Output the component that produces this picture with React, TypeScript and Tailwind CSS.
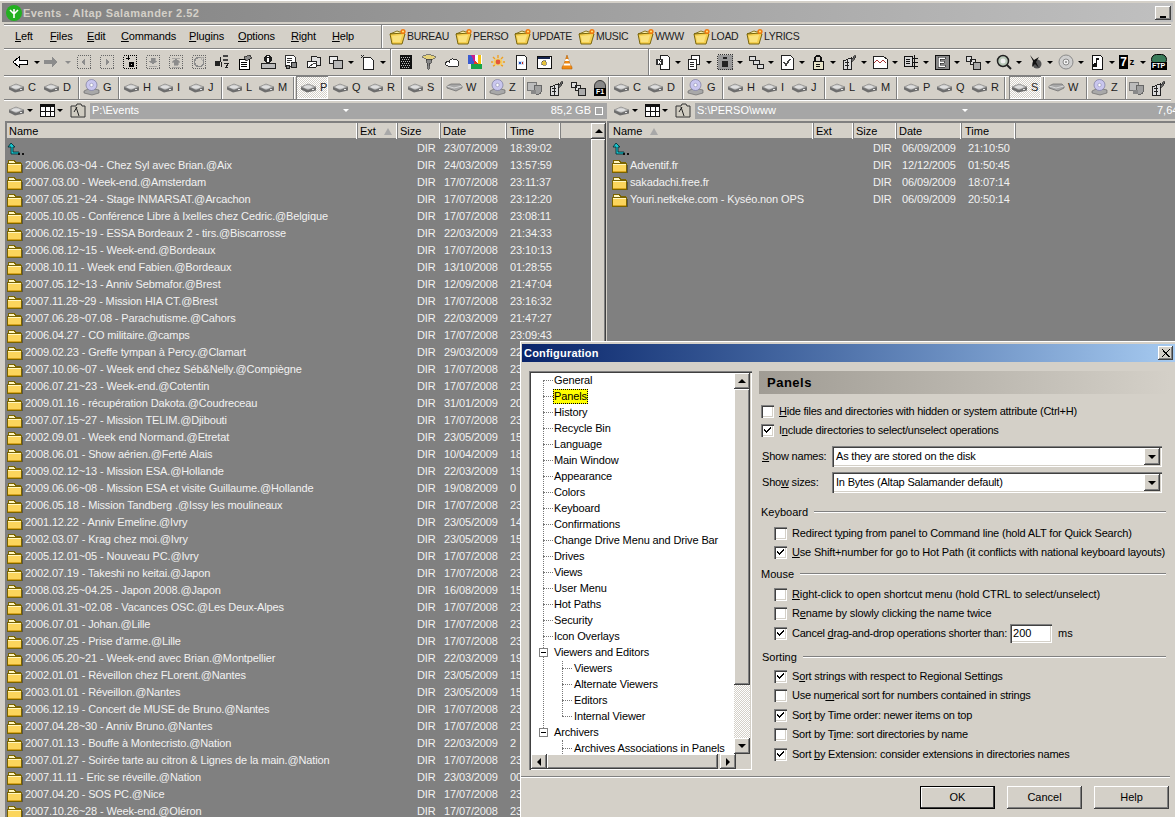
import React from 'react';

const raised = 'shadow-[inset_-1px_-1px_0_#404040,inset_1px_1px_0_#ffffff,inset_-2px_-2px_0_#808080]';
const sunken = 'shadow-[inset_1px_1px_0_#808080,inset_2px_2px_0_#404040,inset_-1px_-1px_0_#ffffff,inset_-2px_-2px_0_#d4d0c8]';

const rows: [string, string, string][] = [
  ['2006.06.03~04 - Chez Syl avec Brian.@Aix', '24/03/2009', '13:57:59'],
  ['2007.03.00 - Week-end.@Amsterdam', '17/07/2008', '23:11:37'],
  ['2007.05.21~24 - Stage INMARSAT.@Arcachon', '17/07/2008', '23:12:20'],
  ['2005.10.05 - Conférence Libre à Ixelles chez Cedric.@Belgique', '17/07/2008', '23:08:11'],
  ['2006.02.15~19 - ESSA Bordeaux 2 - tirs.@Biscarrosse', '22/03/2009', '21:34:33'],
  ['2006.08.12~15 - Week-end.@Bordeaux', '17/07/2008', '23:10:13'],
  ['2008.10.11 - Week end Fabien.@Bordeaux', '13/10/2008', '01:28:55'],
  ['2007.05.12~13 - Anniv Sebmafor.@Brest', '12/09/2008', '21:47:04'],
  ['2007.11.28~29 - Mission HIA CT.@Brest', '17/07/2008', '23:16:32'],
  ['2007.06.28~07.08 - Parachutisme.@Cahors', '22/03/2009', '21:47:27'],
  ['2006.04.27 - CO militaire.@camps', '17/07/2008', '23:09:43'],
  ['2009.02.23 - Greffe tympan à Percy.@Clamart', '29/03/2009', '22'],
  ['2007.10.06~07 - Week end chez Séb&Nelly.@Compiègne', '17/07/2008', '23'],
  ['2006.07.21~23 - Week-end.@Cotentin', '17/07/2008', '23'],
  ['2009.01.16 - récupération Dakota.@Coudreceau', '31/01/2009', '20'],
  ['2007.07.15~27 - Mission TELIM.@Djibouti', '17/07/2008', '23'],
  ['2002.09.01 - Week end Normand.@Etretat', '23/05/2009', '15'],
  ['2008.06.01 - Show aérien.@Ferté Alais', '10/04/2009', '18'],
  ['2009.02.12~13 - Mission ESA.@Hollande', '22/03/2009', '19'],
  ['2009.06.06~08 - Mission ESA et visite Guillaume.@Hollande', '19/08/2009', '0'],
  ['2006.05.18 - Mission Tandberg .@Issy les moulineaux', '17/07/2008', '23'],
  ['2001.12.22 - Anniv Emeline.@Ivry', '23/05/2009', '14'],
  ['2002.03.07 - Krag chez moi.@Ivry', '23/05/2009', '15'],
  ['2005.12.01~05 - Nouveau PC.@Ivry', '17/07/2008', '23'],
  ['2002.07.19 - Takeshi no keitai.@Japon', '17/07/2008', '23'],
  ['2008.03.25~04.25 - Japon 2008.@Japon', '16/08/2009', '15'],
  ['2006.01.31~02.08 - Vacances OSC.@Les Deux-Alpes', '17/07/2008', '23'],
  ['2006.07.01 - Johan.@Lille', '17/07/2008', '23'],
  ['2006.07.25 - Prise d\'arme.@Lille', '17/07/2008', '23'],
  ['2006.05.20~21 - Week-end avec Brian.@Montpellier', '22/03/2009', '19'],
  ['2002.01.01 - Réveillon chez FLorent.@Nantes', '23/05/2009', '15'],
  ['2003.01.01 - Réveillon.@Nantes', '23/05/2009', '15'],
  ['2006.12.19 - Concert de MUSE de Bruno.@Nantes', '17/07/2008', '23'],
  ['2007.04.28~30 - Anniv Bruno.@Nantes', '17/07/2008', '23'],
  ['2007.01.13 - Bouffe à Montecristo.@Nation', '22/03/2009', '2'],
  ['2007.01.27 - Soirée tarte au citron & Lignes de la main.@Nation', '17/07/2008', '23'],
  ['2007.11.11 - Eric se réveille.@Nation', '23/03/2009', '00'],
  ['2007.04.20 - SOS PC.@Nice', '17/07/2008', '23'],
  ['2007.10.26~28 - Week-end.@Oléron', '17/07/2008', '23'],
];

const rightRows: [string, string, string][] = [
  ['Adventif.fr', '12/12/2005', '01:50:45'],
  ['sakadachi.free.fr', '06/09/2009', '18:07:14'],
  ['Youri.netkeke.com - Kyséo.non OPS', '06/09/2009', '20:50:14'],
];

const tree: [string, number][] = [
  ['General', 0], ['Panels', 0], ['History', 0], ['Recycle Bin', 0], ['Language', 0], ['Main Window', 0],
  ['Appearance', 0], ['Colors', 0], ['Keyboard', 0], ['Confirmations', 0], ['Change Drive Menu and Drive Bar', 0],
  ['Drives', 0], ['Views', 0], ['User Menu', 0], ['Hot Paths', 0], ['Security', 0], ['Icon Overlays', 0],
  ['Viewers and Editors', 2], ['Viewers', 1], ['Alternate Viewers', 1], ['Editors', 1], ['Internal Viewer', 1],
  ['Archivers', 2], ['Archives Associations in Panels', 1],
];

function Amp({ text }: { text: string }) {
  const i = text.indexOf('&');
  if (i < 0) return <>{text}</>;
  return (
    <>
      {text.slice(0, i)}
      <u>{text[i + 1]}</u>
      {text.slice(i + 2)}
    </>
  );
}

function Svg({ children, className = 'w-4 h-4' }: { children: React.ReactNode; className?: string }) {
  return (
    <svg viewBox="0 0 16 16" className={`${className} shrink-0`} shapeRendering="crispEdges">
      {children}
    </svg>
  );
}

function Caret() {
  return <span className="block w-0 h-0 shrink-0 border-x-[3px] border-x-transparent border-t-[3px] border-t-black" />;
}

function Folder() {
  return (
    <svg viewBox="0 0 16 14" className="w-4 h-[14px] shrink-0" shapeRendering="crispEdges">
      <path d="M1.5 1.5h6l1 2h5v2h-12z" fill="#fff6c0" stroke="#7a6400" />
      <path d="M.5 4.5h14v9H.5z" fill="#fbd55c" stroke="#7a6400" />
      <path d="M1 5h13v1H1z" fill="#fff6c0" />
      <path d="M1 12h13v1H1z" fill="#d9a520" />
      <path d="M15 6h1v8h-1z" fill="#555" />
    </svg>
  );
}

function HotFolder() {
  return (
    <svg viewBox="0 0 18 18" className="w-[18px] h-[18px] shrink-0">
      <path d="M1 6l7-3 3 1 4-1-1 3z" fill="#fff3b0" stroke="#6e5a00" strokeWidth="0.8" />
      <path d="M1 6l13-1 2 1-3 10H3z" fill="#f5cf50" stroke="#6e5a00" strokeWidth="0.9" />
      <path d="M3 8l10-1-2 7H4z" fill="#fbe27c" />
      <circle cx="14" cy="3.5" r="2.6" fill="#ef7a10" />
      <circle cx="14" cy="3.5" r="1.1" fill="#ffe070" />
    </svg>
  );
}

function UpDir() {
  return (
    <svg viewBox="0 0 18 14" className="w-[18px] h-[14px] shrink-0">
      <path d="M4 1l4 4H6v5h6v2H4V5H1z" fill="#19c6cf" stroke="#04343a" strokeWidth="0.9" />
      <rect x="11" y="11" width="2" height="2" fill="#111" />
      <rect x="15" y="11" width="2" height="2" fill="#111" />
    </svg>
  );
}

function DriveIcon() {
  return (
    <svg viewBox="0 0 17 12" className="w-[17px] h-3 shrink-0">
      <path d="M1 5v2.5l6 3 9-2V5z" fill="#6d6d6d" />
      <path d="M1 5l7-3 8 3-8 3z" fill="#c4c4c4" stroke="#777" strokeWidth="0.6" />
      <ellipse cx="8" cy="5" rx="4" ry="1.4" fill="#dedede" />
      <rect x="12" y="7" width="2" height="1" fill="#e8e8e8" />
    </svg>
  );
}

function CdIcon() {
  return (
    <svg viewBox="0 0 17 17" className="w-[17px] h-[17px] shrink-0">
      <path d="M1 12l6-3 9 2v3l-7 2-8-2z" fill="#a8a8a8" stroke="#5e5e5e" strokeWidth="0.6" />
      <circle cx="8.5" cy="6" r="5.5" fill="#c9c6ee" stroke="#7a7a9c" strokeWidth="0.7" />
      <circle cx="8.5" cy="6" r="1.7" fill="#fff" stroke="#7a7a9c" strokeWidth="0.5" />
    </svg>
  );
}

function FlatDrive() {
  return (
    <svg viewBox="0 0 17 12" className="w-[17px] h-3 shrink-0">
      <path d="M1 4l4-2h9l2 2v2l-6 3-9-3z" fill="#a8a8a8" stroke="#666" strokeWidth="0.7" />
      <path d="M1 4l7 2 8-2" fill="none" stroke="#e4e4e4" strokeWidth="0.8" />
    </svg>
  );
}

function Dotted({ children }: { children?: React.ReactNode }) {
  return (
    <Svg>
      <rect x="1.5" y="1.5" width="13" height="13" fill="none" stroke="#666" strokeDasharray="1 1" />
      {children}
    </Svg>
  );
}

const leftTools: React.ReactNode[] = [
  <Dotted><path d="M9 5v6L5 8z" fill="#8c8c8c" /></Dotted>,
  <Dotted><path d="M7 5v6l4-3z" fill="#8c8c8c" /></Dotted>,
  <Svg>
    <rect x="1.5" y="1.5" width="13" height="13" fill="none" stroke="#000" strokeDasharray="1 1" />
    <path d="M4 4h4M6 2v4" stroke="#000" />
    <rect x="7" y="8" width="5" height="5" fill="#000" />
    <rect x="9" y="10" width="1" height="1" fill="#d4d0c8" />
  </Svg>,
  <Dotted><path d="M6 4h4v3h2l-4 3-4-3h2zM4 12h8" fill="#8c8c8c" stroke="#8c8c8c" strokeWidth="0.6" /></Dotted>,
  <Dotted><path d="M6 11h4V8h2L8 5 4 8h2zM4 4h8M4 13h8" fill="#8c8c8c" stroke="#8c8c8c" strokeWidth="0.6" /></Dotted>,
  <Dotted><circle cx="8" cy="8" r="4.5" fill="none" stroke="#8c8c8c" strokeWidth="1.5" /><path d="M9 3l4 0-1 4z" fill="#d4d0c8" stroke="#8c8c8c" strokeWidth="0.5" /></Dotted>,
  <Svg>
    <path d="M1 7h5v5H1zM3 9h1v1H3z" fill="#222" />
    <path d="M9 1h5v2h-5zM9 5h5v2h-5z" fill="#444" />
    <path d="M10 9h5l-3 4h2M6 3l2 10" fill="none" stroke="#222" />
  </Svg>,
  <Svg>
    <path d="M2 5h10v10H2z" fill="#fff" stroke="#000" />
    <path d="M4 8h6M4 10h6M4 12h6" stroke="#000" />
    <path d="M7 3l6-2 2 3-6 3z" fill="#8c8c8c" stroke="#000" strokeWidth="0.6" />
  </Svg>,
  <Svg>
    <circle cx="8" cy="5" r="4" fill="#1c1c1c" />
    <rect x="7" y="2" width="2" height="1" fill="#fff" />
    <rect x="7" y="4" width="2" height="4" fill="#fff" />
    <path d="M1 9h14v5H1z" fill="#bdbdbd" stroke="#222" />
  </Svg>,
  <Svg>
    <path d="M2 1h8l2 2v9H2z" fill="#fff" stroke="#333" />
    <path d="M4 4h5M4 6h5M4 8h3" stroke="#333" />
    <circle cx="11" cy="11" r="3" fill="#888" stroke="#222" />
    <circle cx="5" cy="13" r="2" fill="#888" stroke="#222" />
  </Svg>,
  <Svg>
    <path d="M5 2h5l1 1h3v8H5z" fill="#ddd" stroke="#222" />
    <path d="M1 7h10l-1 6H1z" fill="#fff" stroke="#222" />
    <path d="M3 13l5-4h3" fill="none" stroke="#444" />
  </Svg>,
];

const midTools: React.ReactNode[] = [
  <Svg>
    <path d="M2 1h12v14H2z" fill="#111" />
    <path d="M3 3h10M4 5h8M3 7h10M4 9h8M3 11h10M4 13h8" stroke="#bbb" strokeDasharray="1 1" />
  </Svg>,
  <Svg>
    <path d="M1 3c3-3 10-3 14 0l-3 2H5z" fill="#e6d27a" stroke="#555" strokeWidth="0.7" />
    <path d="M5 5h6l-1 4h-1l-1 6H7L6 9z" fill="#888" stroke="#333" strokeWidth="0.7" />
  </Svg>,
  <Svg>
    <path d="M2 11c-2-2 1-4 3-3 0-3 4-4 6-2 2-1 4 1 3 3 2 2 0 4-2 3H4z" fill="#fff" stroke="#333" />
  </Svg>,
  <Svg>
    <path d="M1 1h7v9H1z" fill="#c81f8a" />
    <path d="M1 1h3l4 9H1z" fill="#3a5bd0" />
    <path d="M8 1h7v9H8z" fill="#fff" />
    <path d="M11 1h3v9h-3z" fill="#f4c20d" />
    <path d="M4 10h11v5H4z" fill="#17a34a" />
    <path d="M1 10h3v5H1z" fill="#e8e8e8" />
    <path d="M8 6l3 4H7z" fill="#e53c1f" />
  </Svg>,
  <svg viewBox="0 0 16 16" className="w-4 h-4 shrink-0">
    <path d="M8 1v3M3 3l2 2M13 3l-2 2M1 8h2M13 8h2M3 12l2-1M13 12l-2-1" stroke="#f0a020" strokeWidth="1.4" />
    <ellipse cx="8" cy="8" rx="4.5" ry="3.5" fill="#f4cf60" />
    <circle cx="8" cy="8" r="2.4" fill="#e2553a" />
  </svg>,
  <Svg>
    <path d="M3 1h8l2 2v12H3z" fill="#fff" stroke="#222" />
    <path d="M5 7h6v4H5z" fill="#d6e0f2" />
    <path d="M6 8h2v2H6z" fill="#1b4fbf" />
    <path d="M9 8h1v2H9z" fill="#c2261b" />
  </Svg>,
  <Svg>
    <path d="M1 2h14v12H1z" fill="#fff" stroke="#111" />
    <path d="M2 3h12v2H2z" fill="#16244e" />
    <circle cx="8" cy="9" r="2.5" fill="#e5c23c" stroke="#333" strokeWidth="0.5" />
  </Svg>,
  <svg viewBox="0 0 16 16" className="w-4 h-4 shrink-0">
    <path d="M8 1l3 9 2 3v2H3v-2l2-3z" fill="#f08a14" stroke="#a85600" strokeWidth="0.5" />
    <path d="M6.6 5h2.8l.7 2H5.9zM5 9.5h6l.6 2H4.4z" fill="#fff" />
  </svg>,
];

const rightTools: React.ReactNode[] = [
  <Svg>
    <path d="M5 1h7l2 2v12H5z" fill="#fff" stroke="#222" />
    <path d="M1 5h7v6H1z" fill="#333" />
    <path d="M3 6l3 4M6 6l-3 4" stroke="#fff" />
  </Svg>,
  <Svg>
    <path d="M5 1h8v9H5z" fill="#fff" stroke="#222" />
    <path d="M2 5h8v10H2z" fill="#fff" stroke="#222" />
    <path d="M4 8h4M4 10h4M4 12h4" stroke="#222" />
  </Svg>,
  <Svg>
    <rect x="0.5" y="0.5" width="15" height="15" fill="#9a9a9a" stroke="#333" strokeDasharray="1 1" />
    <path d="M6 3h4v2h-4zM5 7h6v6H5z" fill="#222" />
  </Svg>,
  <Svg>
    <path d="M1 2h6v4H1zM5 6h6v4H5zM9 10h6v4H9z" fill="#ddd" stroke="#222" />
  </Svg>,
  <Svg>
    <path d="M2 1h9l3 3v11H2z" fill="#fff" stroke="#222" />
    <path d="M5 8l2 3 4-6" fill="none" stroke="#444" strokeWidth="1.5" />
  </Svg>,
  <Svg>
    <path d="M5 7V4c0-3 6-3 6 0v3" fill="none" stroke="#111" strokeWidth="1.4" />
    <path d="M3 7h10v8H3z" fill="#e8e4c9" stroke="#111" />
    <path d="M6 10h4M6 12h4" stroke="#111" />
  </Svg>,
  <Svg>
    <path d="M2 7l8-3v11H2z" fill="#ddd" stroke="#222" />
    <path d="M4 8h4M4 11h4M6 6v9" stroke="#222" />
    <path d="M10 6l4-5 1 2-4 5z" fill="#666" stroke="#111" strokeWidth="0.6" />
  </Svg>,
  <Svg>
    <path d="M1 2h10l4 3v9H1z" fill="#fff" stroke="#222" />
    <path d="M2 9l3-3 3 3 3-3 3 3" fill="none" stroke="#a33" />
  </Svg>,
  <Svg>
    <path d="M1 2h8v10H1z" fill="#d8d8d8" stroke="#111" />
    <path d="M3 5h4M3 7h4M3 9h4" stroke="#111" />
    <path d="M11 1v14M10 4h5M10 8h5M10 12h5" stroke="#111" />
  </Svg>,
  <Svg>
    <path d="M1 1h14v14H1z" fill="#888" stroke="#111" />
    <path d="M4 3h7v2H6v2h4v2H6v2h5v2H4z" fill="#fff" stroke="#111" strokeWidth="0.5" />
  </Svg>,
  <Svg>
    <path d="M1 2h5v5H1zM5 5h5v5H5z" fill="#ddd" stroke="#222" />
    <path d="M8 8h7v7H8z" fill="#aaa" stroke="#222" />
  </Svg>,
  <svg viewBox="0 0 16 16" className="w-4 h-4 shrink-0">
    <circle cx="7" cy="7" r="5.5" fill="#b8c8b8" stroke="#222" strokeWidth="1.5" />
    <circle cx="7" cy="7" r="2.5" fill="#eee" />
    <path d="M11 11l4 4" stroke="#222" strokeWidth="2" />
  </svg>,
  <svg viewBox="0 0 16 16" className="w-4 h-4 shrink-0">
    <circle cx="10" cy="10" r="4.5" fill="#555" />
    <path d="M3 1l4 5 5-3-3 5 3 6-4-4-3 3 1-6z" fill="#111" />
  </svg>,
  <svg viewBox="0 0 16 16" className="w-4 h-4 shrink-0">
    <circle cx="8" cy="8" r="7" fill="#cfcfcf" stroke="#8a8a8a" />
    <circle cx="8" cy="8" r="3" fill="#f0f0f0" stroke="#8a8a8a" />
    <circle cx="8" cy="8" r="1" fill="#8a8a8a" />
  </svg>,
  <Svg>
    <path d="M3 1h8l2 2v12H3z" fill="#fff" stroke="#111" />
    <path d="M7 4h3v2H8v5a2 2 0 1 1-1-1.7z" fill="#111" />
  </Svg>,
  <div className="w-[17px] h-[14px] flex shrink-0 bg-black">
    <span className="w-[9px] text-center text-white text-[12px] leading-[14px] font-bold">7</span>
    <span className="w-2 bg-[#d4d0c8] text-center text-black text-[9px] leading-[14px] font-bold">z</span>
  </div>,
  <div className="w-4 h-4 shrink-0 relative">
    <span className="absolute inset-x-0 top-0 h-[11px] rounded-full bg-[#3a7c5a] border border-black" />
    <span className="absolute left-0 right-0 bottom-0 bg-black text-white text-[7px] leading-[8px] font-bold text-center">FTP</span>
  </div>,
];

const netIcons: React.ReactNode[] = [
  <Svg>
    <path d="M1 2h9v8H1z" fill="#bcbcbc" stroke="#777" />
    <path d="M8 5h7v7c0 3-7 3-7 0z" fill="#a0a0a0" stroke="#666" />
    <path d="M5 10h5v4H5z" fill="#888" />
  </Svg>,
  <Svg>
    <path d="M2 7l8-3v11H2z" fill="#ddd" stroke="#222" />
    <path d="M4 8h4M4 11h4M6 6v9" stroke="#222" />
    <path d="M10 6l4-5 1 2-4 5z" fill="#666" stroke="#111" strokeWidth="0.6" />
  </Svg>,
  <Svg>
    <path d="M1 2h5v5H1zM5 5h5v5H5z" fill="#ddd" stroke="#222" />
    <path d="M8 8h7v7H8z" fill="#aaa" stroke="#222" />
  </Svg>,
  <div className="w-3 h-4 shrink-0 relative">
    <span className="absolute inset-x-0 top-0 h-[11px] rounded-t-md bg-[#888] border border-[#333]" />
    <span className="absolute left-0 right-0 bottom-0 bg-black text-white text-[7px] leading-[8px] font-bold text-center">F1</span>
  </div>,
];

function Sep() {
  return (
    <div className="w-[5px] h-[22px] flex justify-center shrink-0">
      <span className="w-[2px] h-full border-l border-l-[#808080] border-r border-r-white" />
    </div>
  );
}

type Drive = [string, string, 'hdd' | 'cd' | 'flat', boolean?];
type DriveGroup = Drive[];

function DriveBtn({ drive }: { drive: Drive }) {
  const [letter, cls, kind, on] = drive;
  return (
    <div
      className={`h-[23px] flex items-center gap-[3px] shrink-0 text-[#222] ${cls} ${
        on ? 'bg-[repeating-conic-gradient(#ffffff_0_25%,#d4d0c8_0_50%)] bg-[length:2px_2px] shadow-[inset_1px_1px_0_#808080,inset_-1px_-1px_0_#ffffff]' : ''
      }`}
    >
      {kind === 'hdd' && <DriveIcon />}
      {kind === 'cd' && <CdIcon />}
      {kind === 'flat' && <FlatDrive />}
      <span>{letter}</span>
    </div>
  );
}

const leftDrives: DriveGroup[] = [
  [['C', 'w-[35px] pl-[2px]', 'hdd'], ['D', 'w-[35px] pl-[2px]', 'hdd']],
  [['G', 'w-[35px] pl-[2px]', 'cd']],
  [['H', 'w-[35px] pl-[2px]', 'hdd'], ['I', 'w-[31px] pl-[1px]', 'hdd'], ['J', 'w-[32px] pl-[1px]', 'hdd']],
  [['L', 'w-[32px] pl-[2px]', 'hdd'], ['M', 'w-[35px] pl-[2px]', 'hdd']],
  [['P', 'w-[32px] pl-[4px]', 'hdd', true], ['Q', 'w-[37px] pl-[4px]', 'hdd'], ['R', 'w-[34px] pl-[2px]', 'hdd']],
  [['S', 'w-[35px] pl-[3px]', 'hdd']],
  [['W', 'w-[38px] pl-[2px]', 'flat']],
  [['Z', 'w-[34px] pl-[2px]', 'cd']],
];

const rightDrives: DriveGroup[] = [
  [['C', 'w-[34px] pl-[2px]', 'hdd'], ['D', 'w-[35px] pl-[2px]', 'hdd']],
  [['G', 'w-[35px] pl-[2px]', 'cd']],
  [['H', 'w-[34px] pl-[2px]', 'hdd'], ['I', 'w-[30px] pl-[2px]', 'hdd'], ['J', 'w-[33px] pl-[2px]', 'hdd']],
  [['L', 'w-[32px] pl-[2px]', 'hdd'], ['M', 'w-[35px] pl-[2px]', 'hdd']],
  [['P', 'w-[35px] pl-[4px]', 'hdd'], ['Q', 'w-[35px] pl-[2px]', 'hdd'], ['R', 'w-[33px] pl-[2px]', 'hdd']],
  [['S', 'w-[32px] ml-[2px] pl-[2px]', 'hdd', true]],
  [['W', 'w-[38px] pl-[2px]', 'flat']],
  [['Z', 'w-[34px] pl-[2px]', 'cd']],
];

function DriveRow({ groups }: { groups: DriveGroup[] }) {
  return (
    <>
      {groups.map((group, i) => (
        <React.Fragment key={i}>
          {i > 0 && <Sep />}
          {group.map((d) => (
            <DriveBtn key={d[0]} drive={d} />
          ))}
        </React.Fragment>
      ))}
      <Sep />
    </>
  );
}

function PathTools() {
  return (
    <div className="flex items-center shrink-0">
      <DriveIcon />
      <span className="ml-[2px]"><Caret /></span>
      <svg viewBox="0 0 15 13" className="w-[15px] h-[13px] ml-[7px] shrink-0" shapeRendering="crispEdges">
        <path d="M.5.5h14v12H.5z" fill="#fff" stroke="#111" />
        <path d="M1 1h13v2H1z" fill="#111" />
        <path d="M5.5 3v9M10 3v9M1 7.5h13" stroke="#111" />
      </svg>
      <span className="ml-[2px] mr-[7px]"><Caret /></span>
      <svg viewBox="0 0 16 15" className="w-4 h-[15px] shrink-0">
        <path d="M1 3h5l1-2h4l1 2h3v11H1z" fill="#cfcbc0" stroke="#333" />
        <path d="M6 4l3 9M4 9l3-5" stroke="#222" fill="none" />
      </svg>
    </div>
  );
}

function Header({ cols }: { cols: [string, string, boolean?][] }) {
  return (
    <div className="h-[16px] flex bg-[#d4d0c8] text-black shrink-0 shadow-[inset_0_-1px_0_#808080]">
      {cols.map(([label, cls, arrow]) => (
        <div key={label} className={`h-full flex items-center gap-2 shrink-0 border-r border-r-[#808080] shadow-[inset_-1px_0_0_#ffffff] ${cls}`}>
          {label}
          {arrow && <span className="block w-0 h-0 border-x-[4px] border-x-transparent border-b-[7px] border-b-[#a8a8a8]" />}
        </div>
      ))}
    </div>
  );
}

function FileRow({ name, date, time, up, cls }: { name: string; date: string; time: string; up?: boolean; cls: [string, string, string, string] }) {
  return (
    <div className="h-[17px] flex items-center text-[#f2f2f2] whitespace-nowrap tracking-[-0.13px]">
      <div className={`flex items-center gap-[2px] shrink-0 overflow-hidden ${cls[0]}`}>
        {up ? <UpDir /> : <Folder />}
        {!up && <span>{name}</span>}
      </div>
      <div className={`shrink-0 ${cls[1]}`}>DIR</div>
      <div className={`shrink-0 ${cls[2]}`}>{date}</div>
      <div className={`shrink-0 overflow-hidden ${cls[3]}`}>{time}</div>
    </div>
  );
}

function ArrowBtn({ dir, className = '' }: { dir: 'up' | 'down' | 'left' | 'right'; className?: string }) {
  const tri = {
    up: 'border-x-[4px] border-x-transparent border-b-[4px] border-b-black',
    down: 'border-x-[4px] border-x-transparent border-t-[4px] border-t-black',
    left: 'border-y-[4px] border-y-transparent border-r-[4px] border-r-black',
    right: 'border-y-[4px] border-y-transparent border-l-[4px] border-l-black',
  }[dir];
  return (
    <div className={`bg-[#d4d0c8] flex items-center justify-center shrink-0 ${raised} ${className}`}>
      <span className={`block w-0 h-0 ${tri}`} />
    </div>
  );
}

function Check({ on, label, className = 'h-[19px]', track = 'tracking-[-0.25px]', children }: { on?: boolean; label: string; className?: string; track?: string; children?: React.ReactNode }) {
  return (
    <div className={`flex items-center whitespace-nowrap ${className}`}>
      <span className={`w-[13px] h-[13px] bg-white shrink-0 flex items-center justify-center ${sunken}`}>
        {on && (
          <svg viewBox="0 0 9 9" className="w-[9px] h-[9px]" shapeRendering="crispEdges">
            <path d="M1 3h1v1h1v1h1V4h1V3h1V2h1V1h1v2H7v1H6v1H5v1H4v1H3V6H2V5H1z" fill="#000" />
          </svg>
        )}
      </span>
      <span className={`ml-[5px] ${track}`}><Amp text={label} /></span>
      {children}
    </div>
  );
}

function GroupLabel({ text, className }: { text: string; className: string }) {
  return (
    <div className={`h-[14px] flex items-center gap-[6px] pr-[4px] ${className}`}>
      <span>{text}</span>
      <span className="flex-1 h-[2px] border-t border-t-[#808080] border-b border-b-white" />
    </div>
  );
}

function Combo({ label, value, className }: { label: string; value: string; className: string }) {
  return (
    <div className={`flex items-center h-[21px] ${className}`}>
      <span className="w-[70px] shrink-0 tracking-[-0.2px]"><Amp text={label} /></span>
      <div className={`w-[330px] h-full bg-white flex items-center pl-[4px] pr-[2px] tracking-[-0.2px] ${sunken}`}>
        <span className="flex-1">{value}</span>
        <ArrowBtn dir="down" className="w-4 h-[17px]" />
      </div>
    </div>
  );
}

function DlgButton({ label, primary, className }: { label: string; primary?: boolean; className: string }) {
  return (
    <div className={`h-[23px] flex items-center justify-center bg-[#d4d0c8] ${primary ? 'outline outline-1 outline-black -outline-offset-1 shadow-[inset_-2px_-2px_0_#404040,inset_2px_2px_0_#ffffff]' : raised} ${className}`}>
      {label}
    </div>
  );
}

function TreeRow({ label, kind, selected }: { label: string; kind: number; selected: boolean }) {
  return (
    <div className="h-4 flex items-center relative whitespace-nowrap tracking-[-0.13px]">
      {kind !== 2 && <span className={`absolute top-1/2 h-0 border-t border-dotted border-t-[#777] ${kind === 1 ? 'left-[31px] w-[10px]' : 'left-[12px] w-[10px]'}`} />}
      {kind === 2 && (
        <span className="absolute left-[8px] w-[9px] h-[9px] bg-white border border-[#808080] flex items-center justify-center">
          <span className="w-[5px] h-px bg-black" />
        </span>
      )}
      <span
        className={`${kind === 1 ? 'ml-[42px]' : 'ml-[22px]'} px-[1px] h-[15px] flex items-center ${
          selected ? 'bg-[#ffff00] outline-dotted outline-1 -outline-offset-1 outline-black' : ''
        }`}
      >
        {label}
      </span>
    </div>
  );
}

function Panel({ side }: { side: 'left' | 'right' }) {
  const isLeft = side === 'left';
  const leftCols: [string, string, string, string] = ['w-[410px]', 'w-[27px]', 'w-[66px]', 'w-[60px]'];
  const rightCols: [string, string, string, string] = ['w-[264px] pl-[3px]', 'w-[29px]', 'w-[66px]', 'w-[60px]'];
  return (
    <div className={`h-full flex flex-col shrink-0 ${isLeft ? 'w-[607px] pl-[5px]' : 'w-[568px]'}`}>
      <div className={`h-[19px] flex items-center shrink-0 gap-[4px] ${isLeft ? 'pl-[3px]' : 'pl-[6px]'}`}>
        <PathTools />
        {isLeft ? (
          <div className="h-[16px] flex-1 min-w-0 bg-[#a6a6a6] flex items-center text-white relative overflow-hidden">
            <span className="pl-[2px]">P:\Events</span>
            <span className="absolute left-[253px] w-0 h-0 border-x-[3px] border-x-transparent border-t-[3px] border-t-white" />
            <span className="ml-auto pr-[4px] flex items-center gap-[4px] whitespace-nowrap">
              85,2 GB
              <span className="w-2 h-2 border border-white shrink-0" />
            </span>
          </div>
        ) : (
          <div className="h-[16px] flex-1 min-w-0 bg-[#a6a6a6] flex items-center text-white relative overflow-hidden">
            <span className="pl-[2px]">S:\PERSO\www</span>
            <span className="absolute left-[267px] w-0 h-0 border-x-[3px] border-x-transparent border-t-[3px] border-t-white" />
            <span className="absolute left-[462px] whitespace-nowrap">7,64 GB</span>
          </div>
        )}
      </div>
      <div className="h-px shrink-0" />
      <div className={`flex-1 min-h-0 flex border-t-2 border-l-2 border-t-[#808080] border-l-[#808080] ${isLeft ? 'mr-[1px]' : ''}`}>
        <div className="flex-1 min-w-0 flex flex-col">
          {isLeft ? (
            <Header cols={[['Name', 'w-[351px] pl-[2px]'], ['Ext', 'w-[40px] pl-[2px]', true], ['Size', 'w-[43px] pl-[2px]'], ['Date', 'w-[66px] pl-[2px]'], ['Time', 'w-[54px] pl-[3px]']]} />
          ) : (
            <Header cols={[['Name', 'w-[205px] pl-[4px]', true], ['Ext', 'w-[40px] pl-[2px]'], ['Size', 'w-[43px] pl-[2px]'], ['Date', 'w-[65px] pl-[2px]'], ['Time', 'w-[54px] pl-[3px]']]} />
          )}
          <div className="h-px shrink-0 bg-[#808080]" />
          <div className="flex-1 bg-[#808080] overflow-hidden">
            {isLeft ? (
              <>
                <FileRow up name=".." date="23/07/2009" time="18:39:02" cls={leftCols} />
                {rows.map((r) => (
                  <FileRow key={r[0]} name={r[0]} date={r[1]} time={r[2]} cls={leftCols} />
                ))}
              </>
            ) : (
              <>
                <FileRow up name=".." date="06/09/2009" time="21:10:50" cls={rightCols} />
                {rightRows.map((r) => (
                  <FileRow key={r[0]} name={r[0]} date={r[1]} time={r[2]} cls={rightCols} />
                ))}
              </>
            )}
          </div>
        </div>
        {isLeft && (
          <div className="w-[15px] flex flex-col shrink-0">
            <ArrowBtn dir="up" className="h-[16px]" />
            <div className={`flex-1 bg-[#d4d0c8] ${raised}`} />
          </div>
        )}
      </div>
    </div>
  );
}

export default function App() {
  const menus = [
    ['&Left', 'w-[35px]'], ['&Files', 'w-[37px]'], ['&Edit', 'w-[34px]'], ['&Commands', 'w-[68px]'],
    ['&Plugins', 'w-[49px]'], ['&Options', 'w-[53px]'], ['&Right', 'w-[41px]'], ['&Help', 'w-[40px]'],
  ];
  const hotPaths = [
    ['BUREAU', 'w-[66px]'], ['PERSO', 'w-[59px]'], ['UPDATE', 'w-[64px]'], ['MUSIC', 'w-[59px]'],
    ['WWW', 'w-[56px]'], ['LOAD', 'w-[53px]'], ['LYRICS', 'w-[60px]'],
  ];

  return (
    <div className="w-[1175px] h-[817px] relative overflow-hidden bg-[#d4d0c8] text-[11px] leading-none text-black font-['Liberation_Sans',sans-serif] flex flex-col">
      {/* main window title */}
      <div className="h-[3px] shrink-0 border-t border-t-white" />
      <div className="h-[19px] shrink-0 bg-gradient-to-r from-[#808080] to-[#c0c0c0] flex items-center pl-[4px] mx-[2px]">
        <span className="w-4 h-4 rounded-full bg-[#23b020] flex items-center justify-center shrink-0">
          <svg viewBox="0 0 12 12" className="w-3 h-3">
            <path d="M6 11V6M6 7L2 3M6 7l4-4M6 6V2" stroke="#fff" strokeWidth="1.6" fill="none" />
          </svg>
        </span>
        <span className="ml-px mt-px text-[#d4d0c8] font-bold tracking-[0.45px]">Events - Altap Salamander 2.52</span>
        <span className={`ml-auto mr-[2px] w-4 h-[14px] bg-[#d4d0c8] flex items-end justify-center pb-[2px] ${raised}`}>
          <span className="w-[6px] h-[2px] bg-black" />
        </span>
      </div>

      {/* menu + hot paths */}
      <div className="h-[25px] mt-[2px] flex shrink-0 mx-[4px] border-y border-y-[#808080] shadow-[inset_0_1px_0_#ffffff,0_1px_0_#ffffff]">
        <div className="w-[378px] flex items-center pl-[11px] shrink-0 border-r border-r-[#808080] tracking-[-0.15px]">
          {menus.map(([m, w]) => (
            <span key={m} className={`${w} shrink-0`}><Amp text={m} /></span>
          ))}
        </div>
        <div className="flex-1 flex items-center pl-[6px] border-l border-l-white text-[10.5px] tracking-[-0.3px]">
          {hotPaths.map(([p, w]) => (
            <span key={p} className={`${w} shrink-0 flex items-center gap-0 text-[#222]`}>
              <HotFolder />
              {p}
            </span>
          ))}
        </div>
      </div>

      {/* toolbars */}
      <div className="h-[27px] flex items-center shrink-0 mx-[4px] border-b border-b-[#808080] shadow-[0_1px_0_#ffffff]">
        <div className="w-[387px] h-full flex items-center pl-[6px] shrink-0 border-r border-r-[#808080]">
          <div className="w-[31px] flex items-center justify-center gap-[6px] shrink-0">
            <Svg>
              <path d="M1 8l6-5v3h8v4H7v3z" fill="#fff" stroke="#000" />
            </Svg>
            <Caret />
          </div>
          <div className="w-[31px] flex items-center justify-center gap-[6px] shrink-0">
            <Svg>
              <path d="M15 8L9 3v3H1v4h8v3z" fill="#8c8c8c" />
            </Svg>
            <span className="block w-0 h-0 border-x-[3px] border-x-transparent border-t-[3px] border-t-[#8c8c8c]" />
          </div>
          {leftTools.map((t, i) => (
            <div key={i} className="w-[23px] flex justify-center shrink-0">{t}</div>
          ))}
          <div className="w-[32px] flex items-center justify-center gap-[4px] shrink-0">
            <Svg>
              <path d="M1 2h8v7H1z" fill="#eee" stroke="#222" />
              <path d="M5 6h9v8H5z" fill="#b8b8b8" stroke="#222" />
            </Svg>
            <Caret />
          </div>
          <div className="w-[31px] flex items-center justify-center gap-[4px] shrink-0">
            <Svg>
              <path d="M3 3h7l3 3v9H3z" fill="#fff" stroke="#222" />
              <path d="M1 1l3 3M4 1L1 4" stroke="#222" />
            </Svg>
            <Caret />
          </div>
        </div>
        <div className="w-[258px] h-full flex items-center pl-[2px] shrink-0 border-l border-l-white border-r border-r-[#808080]">
          {midTools.map((t, i) => (
            <div key={i} className="w-[23px] flex justify-center shrink-0">{t}</div>
          ))}
        </div>
        <div className="flex-1 h-full flex items-center pl-[2px] border-l border-l-white overflow-hidden">
          {rightTools.map((t, i) => (
            <div key={i} className="w-[31px] flex items-center justify-center gap-[4px] shrink-0">
              {t}
              <Caret />
            </div>
          ))}
        </div>
      </div>

      {/* drive bars */}
      <div className="h-[24px] flex items-center shrink-0 mx-[4px] pl-[2px] border-b border-b-[#808080] shadow-[0_1px_0_#ffffff] overflow-hidden">
        <DriveRow groups={leftDrives} />
        <div className="flex items-center gap-[6px] shrink-0">
          {netIcons.slice(0, 3).map((n, i) => (
            <div key={i} className="w-4 flex justify-center shrink-0">{n}</div>
          ))}
        </div>
        <div className="ml-[8px]">{netIcons[3]}</div>
        <Sep />
        <DriveRow groups={rightDrives} />
        <div className="flex items-center gap-[6px] shrink-0">
          {netIcons.slice(0, 2).map((n, i) => (
            <div key={i} className="w-4 flex justify-center shrink-0">{n}</div>
          ))}
        </div>
      </div>

      {/* panels */}
      <div className="flex-1 min-h-0 flex pt-px">
        <Panel side="left" />
        <Panel side="right" />
      </div>

      {/* configuration dialog */}
      <div className="absolute left-[520px] top-[341px] w-[655px] h-[476px] bg-[#d4d0c8] border-t border-l border-t-white border-l-white flex flex-col">
        <div className="h-[18px] mt-[2px] ml-[1px] shrink-0 bg-gradient-to-r from-[#0a246a] to-[#a6caf0] flex items-center pl-[2px] text-white font-bold tracking-[0.2px]">
          Configuration
          <span className={`ml-auto mr-[2px] w-[15px] h-[14px] bg-[#d4d0c8] flex items-center justify-center ${raised}`}>
            <svg viewBox="0 0 8 8" className="w-2 h-2" shapeRendering="crispEdges">
              <path d="M0 0l8 8M8 0L0 8" stroke="#000" strokeWidth="1.4" />
            </svg>
          </span>
        </div>

        <div className="flex pt-[9px] pl-[8px] shrink-0">
          {/* tree */}
          <div className={`w-[223px] h-[399px] p-[2px] shrink-0 ${sunken}`}>
            <div className="flex h-[381px]">
              <div className="w-[205px] h-full bg-white overflow-hidden relative">
                <span className="absolute left-[12px] top-[7px] h-[352px] border-l border-dotted border-l-[#777]" />
                <span className="absolute left-[31px] top-[288px] h-[55px] border-l border-dotted border-l-[#777]" />
                <span className="absolute left-[31px] top-[367px] h-[14px] border-l border-dotted border-l-[#777]" />
                <div className="-mt-px">
                  {tree.map(([label, kind]) => (
                    <TreeRow key={label} label={label} kind={kind} selected={label === 'Panels'} />
                  ))}
                </div>
              </div>
              <div className="w-[16px] flex flex-col shrink-0">
                <ArrowBtn dir="up" className="h-[16px]" />
                <div className={`h-[296px] bg-[#d4d0c8] ${raised}`} />
                <div className="flex-1 bg-[repeating-conic-gradient(#ffffff_0_25%,#d4d0c8_0_50%)] bg-[length:2px_2px]" />
                <ArrowBtn dir="down" className="h-[16px]" />
              </div>
            </div>
            <div className="flex h-[15px] w-[205px]">
              <ArrowBtn dir="left" className="w-[16px]" />
              <div className={`flex-1 bg-[#d4d0c8] ${raised}`} />
              <ArrowBtn dir="right" className="w-[16px] ml-[2px]" />
            </div>
          </div>

          {/* options */}
          <div className="w-[411px] ml-[7px] shrink-0">
            <div className="h-[23px] pl-[8px] flex items-center text-[13px] font-bold tracking-[0.5px] bg-gradient-to-r from-[#a09c94] to-[#d4d0c8]">
              Panels
            </div>
            <div className="mt-[8px] pl-[2px]">
              <Check label="&Hide files and directories with hidden or system attribute (Ctrl+H)" />
              <Check on label="I&nclude directories to select/unselect operations" />
            </div>
            <Combo label="&Show names:" value="As they are stored on the disk" className="mt-[6px] pl-[3px]" />
            <Combo label="Sho&w sizes:" value="In Bytes (Altap Salamander default)" className="mt-[5px] pl-[3px]" />
            <GroupLabel text="Keyboard" className="mt-[12px] pl-[2px]" />
            <div className="mt-[5px] pl-[15px]">
              <Check track="tracking-[-0.18px]" label="Redirect t&yping from panel to Command line (hold ALT for Quick Search)" />
              <Check track="tracking-[-0.17px]" on label="&Use Shift+number for go to Hot Path (it conflicts with national keyboard layouts)" />
            </div>
            <GroupLabel text="Mouse" className="mt-[5px] pl-[2px]" />
            <div className="mt-[4px] pl-[15px]">
              <Check track="tracking-[-0.09px]" label="&Right-click to open shortcut menu (hold CTRL to select/unselect)" />
              <Check track="tracking-[-0.15px]" label="R&ename by slowly clicking the name twice" />
              <Check on label="Cancel &drag-and-drop operations shorter than:" className="h-[20px]">
                <span className={`ml-[3px] w-[42px] h-[19px] bg-white flex items-center pl-[3px] ${sunken}`}>200</span>
                <span className="ml-[6px]">ms</span>
              </Check>
            </div>
            <GroupLabel text="Sorting" className="mt-[7px] pl-[3px]" />
            <div className="mt-[3px] pl-[15px]">
              <Check track="tracking-[-0.18px]" on label="S&ort strings with respect to Regional Settings" />
              <Check label="Use nu&merical sort for numbers contained in strings" />
              <Check on label="Sor&t by Time order: newer items on top" className="h-[20px]" />
              <Check label="Sort by T&ime: sort directories by name" />
              <Check track="tracking-[-0.23px]" on label="Sort &by Extension: consider extensions in directories names" className="h-[20px]" />
            </div>
          </div>
        </div>

        <div className="h-[2px] mt-[6px] mr-[5px] shrink-0 border-t border-t-[#808080] border-b border-b-white" />
        <div className="flex mt-[8px] pl-[399px]">
          <DlgButton primary label="OK" className="w-[75px]" />
          <DlgButton label="Cancel" className="w-[75px] ml-[12px]" />
          <DlgButton label="Help" className="w-[75px] ml-[12px]" />
        </div>
      </div>
    </div>
  );
}
